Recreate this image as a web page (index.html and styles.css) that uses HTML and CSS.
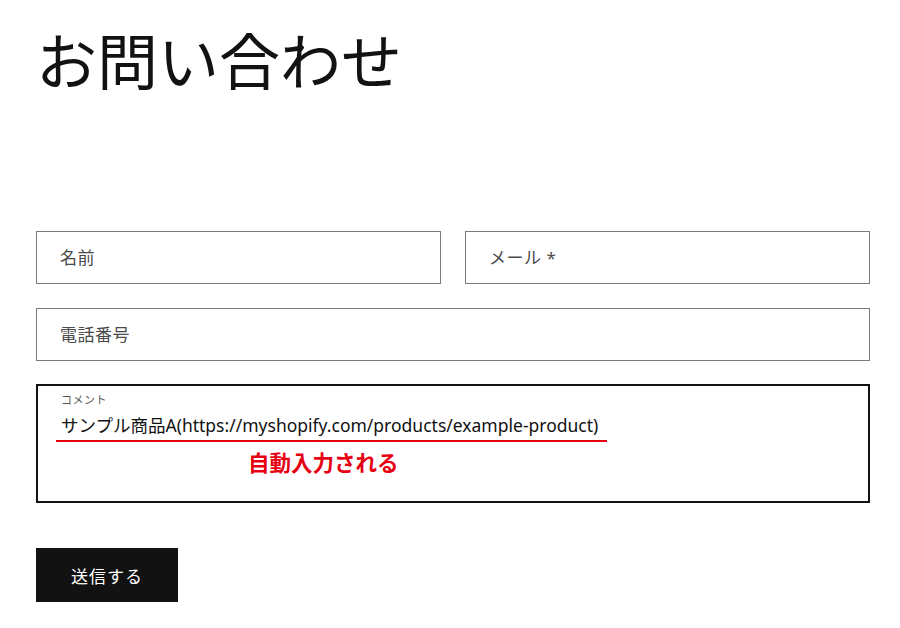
FILE: index.html
```html
<!DOCTYPE html>
<html lang="ja">
<head>
  <meta charset="UTF-8" />
  <meta name="viewport" content="width=device-width, initial-scale=1.0">
  <title>お問い合わせ</title>
  <link rel="stylesheet" href="styles.css">
</head>
<body>
  <div class="page">
    <h1>お問い合わせ</h1>
    <form class="contact-form" action="#">
      <div class="row">
        <div class="field"><span class="placeholder">名前</span></div>
        <div class="field"><span class="placeholder">メール *</span></div>
      </div>
      <div class="field"><span class="placeholder">電話番号</span></div>
      <div class="comment">
        <div class="comment-label">コメント</div>
        <div class="comment-text">サンプル商品A(https://myshopify.com/products/example-product)</div>
        <div class="note">自動入力される</div>
      </div>
      <button type="submit">送信する</button>
    </form>
  </div>
</body>
</html>
```

FILE: styles.css
```css
html, body {
  margin: 0;
  padding: 0;
  background: #fff;
  font-family: "Noto Sans", "Noto Sans CJK JP", sans-serif;
  color: #121212;
}
.page {
  padding: 22px 30px 0 36px;
}
h1 {
  margin: 0;
  font-size: 61px;
  font-weight: 400;
  line-height: 1.3;
  color: #121212;
}
.contact-form {
  margin-top: 130px;
  display: flex;
  flex-direction: column;
  gap: 24px;
  width: 834px;
}
.row {
  display: grid;
  grid-template-columns: 1fr 1fr;
  gap: 24px;
}
.field {
  height: 53px;
  border: 1px solid #7b7b7b;
  box-sizing: border-box;
  display: flex;
  align-items: center;
  padding: 0 0 3px 23px;
}
.placeholder {
  font-size: 17px;
  color: #4a4a4a;
  letter-spacing: 0.5px;
}
.comment {
  height: 119px;
  border: 2px solid #121212;
  box-sizing: border-box;
  margin-top: -1px;
  padding: 6px 0 0 18px;
}
.comment-label {
  padding-left: 5px;
  font-size: 11px;
  color: #555;
  line-height: 16px;
  letter-spacing: 0.5px;
}
.comment-text {
  display: inline-block;
  margin-top: 1px;
  padding: 3px 9px 2px 5px;
  border-bottom: 2px solid #e60012;
  font-size: 17.5px;
  line-height: 26px;
  color: #121212;
}
.note {
  margin: 8px 0 0 192px;
  font-size: 21.5px;
  font-weight: 700;
  color: #e60012;
  line-height: 26px;
}
button {
  margin-top: 21px;
  width: 142px;
  height: 54px;
  border: none;
  background: #121212;
  color: #fff;
  font-family: inherit;
  font-size: 17px;
  letter-spacing: 1px;
  cursor: pointer;
}
```
